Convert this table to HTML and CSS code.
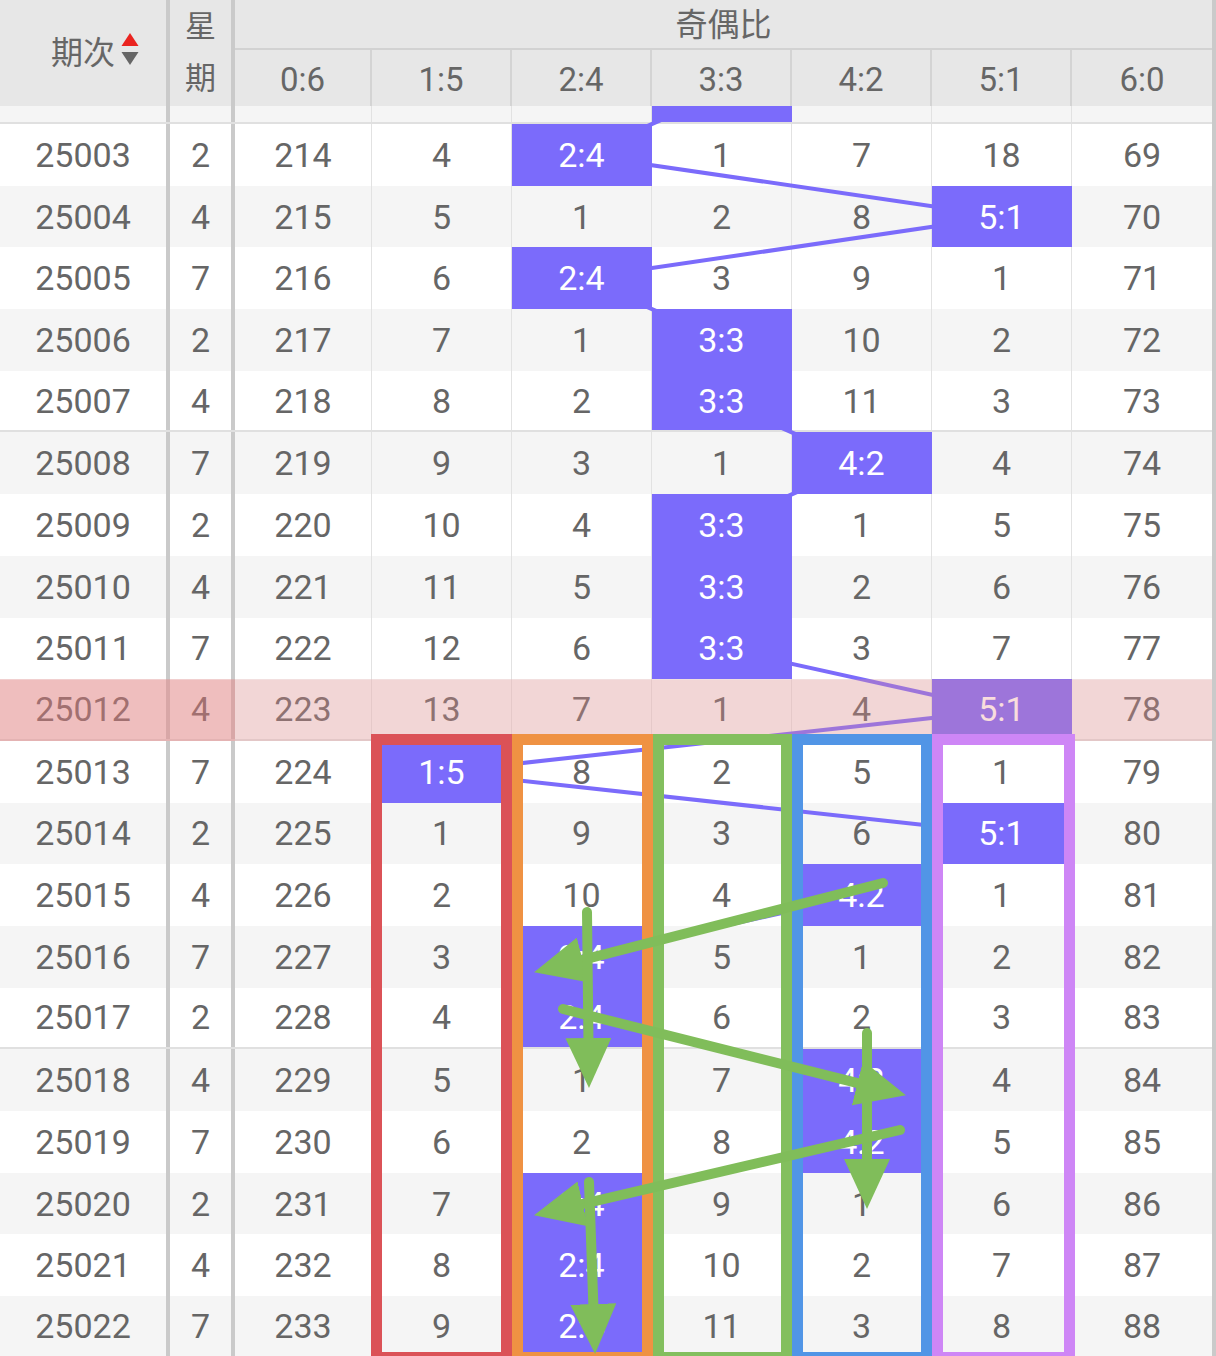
FILE: index.html
```html
<!DOCTYPE html>
<html lang="zh-CN">
<head>
<meta charset="utf-8">
<title>奇偶比走势</title>
<link rel="stylesheet" href="styles.css">
</head>
<body>
<div class="page">
  <div class="head">
    <div class="h h-id"><span class="h-idtext">期次<svg class="sort" width="18" height="34" viewBox="0 0 18 34"><path d="M9 0 L17.5 13 L0.5 13 Z" fill="#ea2420"/><path d="M0.5 19 L17.5 19 L9 32 Z" fill="#666"/></svg></span></div>
    <div class="h h-wk"><span>星</span><span>期</span></div>
    <div class="h h-group">奇偶比</div>
    <div class="h h-col">0:6</div>
    <div class="h h-col">1:5</div>
    <div class="h h-col">2:4</div>
    <div class="h h-col">3:3</div>
    <div class="h h-col">4:2</div>
    <div class="h h-col">5:1</div>
    <div class="h h-col last">6:0</div>
  </div>

  <div class="body">
    <div class="rows">
      <div class="row alt gend first"><div class="c id"></div><div class="c wk"></div><div class="c"></div><div class="c"></div><div class="c"></div><div class="c on"></div><div class="c"></div><div class="c"></div><div class="c last"></div></div>
      <div class="row"><div class="c id">25003</div><div class="c wk">2</div><div class="c">214</div><div class="c">4</div><div class="c on">2:4</div><div class="c">1</div><div class="c">7</div><div class="c">18</div><div class="c last">69</div></div>
      <div class="row alt"><div class="c id">25004</div><div class="c wk">4</div><div class="c">215</div><div class="c">5</div><div class="c">1</div><div class="c">2</div><div class="c">8</div><div class="c on">5:1</div><div class="c last">70</div></div>
      <div class="row"><div class="c id">25005</div><div class="c wk">7</div><div class="c">216</div><div class="c">6</div><div class="c on">2:4</div><div class="c">3</div><div class="c">9</div><div class="c">1</div><div class="c last">71</div></div>
      <div class="row alt"><div class="c id">25006</div><div class="c wk">2</div><div class="c">217</div><div class="c">7</div><div class="c">1</div><div class="c on">3:3</div><div class="c">10</div><div class="c">2</div><div class="c last">72</div></div>
      <div class="row gend"><div class="c id">25007</div><div class="c wk">4</div><div class="c">218</div><div class="c">8</div><div class="c">2</div><div class="c on">3:3</div><div class="c">11</div><div class="c">3</div><div class="c last">73</div></div>
      <div class="row alt"><div class="c id">25008</div><div class="c wk">7</div><div class="c">219</div><div class="c">9</div><div class="c">3</div><div class="c">1</div><div class="c on">4:2</div><div class="c">4</div><div class="c last">74</div></div>
      <div class="row"><div class="c id">25009</div><div class="c wk">2</div><div class="c">220</div><div class="c">10</div><div class="c">4</div><div class="c on">3:3</div><div class="c">1</div><div class="c">5</div><div class="c last">75</div></div>
      <div class="row alt"><div class="c id">25010</div><div class="c wk">4</div><div class="c">221</div><div class="c">11</div><div class="c">5</div><div class="c on">3:3</div><div class="c">2</div><div class="c">6</div><div class="c last">76</div></div>
      <div class="row"><div class="c id">25011</div><div class="c wk">7</div><div class="c">222</div><div class="c">12</div><div class="c">6</div><div class="c on">3:3</div><div class="c">3</div><div class="c">7</div><div class="c last">77</div></div>
      <div class="row alt gend"><div class="c id">25012</div><div class="c wk">4</div><div class="c">223</div><div class="c">13</div><div class="c">7</div><div class="c">1</div><div class="c">4</div><div class="c on">5:1</div><div class="c last">78</div></div>
      <div class="row"><div class="c id">25013</div><div class="c wk">7</div><div class="c">224</div><div class="c on">1:5</div><div class="c">8</div><div class="c">2</div><div class="c">5</div><div class="c">1</div><div class="c last">79</div></div>
      <div class="row alt"><div class="c id">25014</div><div class="c wk">2</div><div class="c">225</div><div class="c">1</div><div class="c">9</div><div class="c">3</div><div class="c">6</div><div class="c on">5:1</div><div class="c last">80</div></div>
      <div class="row"><div class="c id">25015</div><div class="c wk">4</div><div class="c">226</div><div class="c">2</div><div class="c">10</div><div class="c">4</div><div class="c on">4:2</div><div class="c">1</div><div class="c last">81</div></div>
      <div class="row alt"><div class="c id">25016</div><div class="c wk">7</div><div class="c">227</div><div class="c">3</div><div class="c on">2:4</div><div class="c">5</div><div class="c">1</div><div class="c">2</div><div class="c last">82</div></div>
      <div class="row gend"><div class="c id">25017</div><div class="c wk">2</div><div class="c">228</div><div class="c">4</div><div class="c on">2:4</div><div class="c">6</div><div class="c">2</div><div class="c">3</div><div class="c last">83</div></div>
      <div class="row alt"><div class="c id">25018</div><div class="c wk">4</div><div class="c">229</div><div class="c">5</div><div class="c">1</div><div class="c">7</div><div class="c on">4:2</div><div class="c">4</div><div class="c last">84</div></div>
      <div class="row"><div class="c id">25019</div><div class="c wk">7</div><div class="c">230</div><div class="c">6</div><div class="c">2</div><div class="c">8</div><div class="c on">4:2</div><div class="c">5</div><div class="c last">85</div></div>
      <div class="row alt"><div class="c id">25020</div><div class="c wk">2</div><div class="c">231</div><div class="c">7</div><div class="c on">2:4</div><div class="c">9</div><div class="c">1</div><div class="c">6</div><div class="c last">86</div></div>
      <div class="row"><div class="c id">25021</div><div class="c wk">4</div><div class="c">232</div><div class="c">8</div><div class="c on">2:4</div><div class="c">10</div><div class="c">2</div><div class="c">7</div><div class="c last">87</div></div>
      <div class="row alt gend"><div class="c id">25022</div><div class="c wk">7</div><div class="c">233</div><div class="c">9</div><div class="c on">2:4</div><div class="c">11</div><div class="c">3</div><div class="c">8</div><div class="c last">88</div></div>
    </div>
  </div>

  <svg class="layer lines" width="1216" height="1356" viewBox="0 0 1216 1356">
    <polyline fill="none" stroke="#7b6bfb" stroke-width="4" stroke-linejoin="round"
      points="722,93.2 582,154.9 1002,216.6 582,278.3 722,339.9 722,401.6 862,463.4 722,525.1 722,586.8 722,648.5 1002,710.2 442,771.9 1002,833.6 862,895.3 582,957 582,1018.7 862,1080.4 862,1142.1 582,1203.8 582,1265.5 582,1327.2"/>
  </svg>

  <svg class="layer over" width="1216" height="1356" viewBox="0 0 1216 1356">
    <defs>
      <marker id="ah" markerUnits="userSpaceOnUse" markerWidth="50" markerHeight="46" refX="25" refY="23" orient="auto">
        <path d="M0,0 L50,23 L0,46 Z" fill="#80bd5a"/>
      </marker>
    </defs>
    <rect x="0" y="679.3" width="235" height="61.7" fill="rgba(232,125,125,0.45)"/>
    <rect x="235" y="679.3" width="977" height="61.7" fill="rgba(235,142,142,0.3)"/>

    <g fill="none" stroke-width="11">
      <rect x="376.5" y="739.5" width="130" height="618" stroke="#db5257"/>
      <rect x="517.5" y="739.5" width="130" height="618" stroke="#ef9243"/>
      <rect x="658.5" y="739.5" width="128" height="618" stroke="#83bf5e"/>
      <rect x="797.5" y="739.5" width="129" height="618" stroke="#5195e6"/>
      <rect x="937.5" y="739.5" width="132" height="618" stroke="#ce86f6"/>
    </g>

    <g fill="none" stroke="#80bd5a" stroke-width="10" stroke-linecap="round">
      <path d="M883 883 L558.3 966.1" marker-end="url(#ah)"/>
      <path d="M587 912 L588.7 1063" marker-end="url(#ah)"/>
      <path d="M563 1009 L881.7 1089.2" marker-end="url(#ah)"/>
      <path d="M867 1033 L867 1184" marker-end="url(#ah)"/>
      <path d="M900 1130 L558.4 1209.6" marker-end="url(#ah)"/>
      <path d="M589 1182 L594.2 1329" marker-end="url(#ah)"/>
    </g>
  </svg>
</div>
</body>
</html>
```

FILE: styles.css
```css
* { box-sizing: border-box; }

html, body {
  margin: 0;
  padding: 0;
  background: #ffffff;
}

body {
  font-family: Roboto, "Noto Sans", "Noto Sans CJK SC", sans-serif;
  color: #666666;
}

.page {
  position: relative;
  width: 1216px;
  height: 1356px;
  overflow: hidden;
  border-right: 4px solid #cacaca;
  background: #ffffff;
}

/* ---------- header ---------- */
.head {
  position: relative;
  z-index: 5;
  display: grid;
  grid-template-columns: 170px 65px 137px repeat(6, 140px);
  grid-template-rows: 50px 56px;
  height: 106px;
  background: #e7e7e7;
}

.h {
  display: flex;
  align-items: center;
  justify-content: center;
  font-size: 33px;
  color: #666666;
}

.h-id {
  grid-row: 1 / span 2;
  border-right: 4px solid #cacaca;
  font-family: "Noto Sans CJK SC", sans-serif;
  font-size: 32px;
  padding-bottom: 6px;
}

.h-idtext {
  position: relative;
}

.sort {
  position: absolute;
  left: 100%;
  top: 50%;
  margin-left: 6px;
  margin-top: -17px;
}

.h-wk {
  grid-row: 1 / span 2;
  flex-direction: column;
  border-right: 4px solid #cacaca;
  font-family: "Noto Sans CJK SC", sans-serif;
  font-size: 31px;
  line-height: 52px;
  padding-bottom: 6px;
}

.h-group {
  grid-column: 3 / span 7;
  border-bottom: 2px solid #d2d2d2;
  font-family: "Noto Sans CJK SC", sans-serif;
  font-size: 32px;
  padding-bottom: 4px;
}

.h-col {
  padding-top: 2px;
  border-right: 2px solid #d4d4d4;
}

.h-col.last {
  border-right: 0;
}

/* ---------- body ---------- */
.body {
  height: 1250px;
  overflow: hidden;
}

.rows {
  margin-top: -43.7px;
}

.row {
  display: grid;
  grid-template-columns: 170px 65px 137px repeat(6, 140px);
  height: 61.7px;
  background: #ffffff;
}

.row.alt {
  background: #f5f5f5;
}

.row.gend {
  border-bottom: 2px solid #e0e0e0;
}

.c {
  display: flex;
  align-items: center;
  justify-content: center;
  font-size: 34px;
  color: #666666;
  border-right: 1px solid #e2e2e2;
}

.c.id,
.c.wk {
  border-right: 4px solid #cacaca;
}

.c.last {
  border-right: 0;
}

.c.on {
  position: relative;
  z-index: 2;
  background: #7b6bfb;
  border-right-color: transparent;
  color: #ffffff;
}

/* ---------- overlays ---------- */
.layer {
  position: absolute;
  top: 0;
  left: 0;
  pointer-events: none;
}

.lines {
  z-index: 1;
}

.over {
  z-index: 3;
}
```
